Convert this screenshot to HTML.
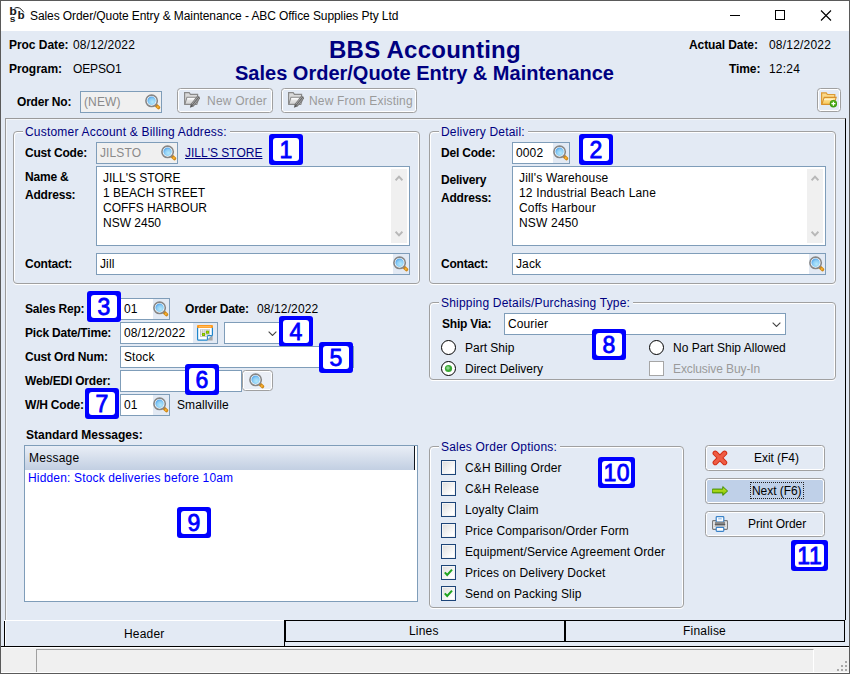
<!DOCTYPE html>
<html><head><meta charset="utf-8"><title>Sales Order/Quote Entry &amp; Maintenance</title>
<style>
*{box-sizing:border-box;margin:0;padding:0}
html,body{width:850px;height:674px;overflow:hidden;background:#fff}
body{font-family:"Liberation Sans",Arial,sans-serif;font-size:12px;color:#000;position:relative;letter-spacing:0.12px}
.a{position:absolute;white-space:nowrap;line-height:14px}
.b{font-weight:bold;letter-spacing:-0.2px}
.nv{color:#000080}
.inp{position:absolute;background:#fff;border:1px solid #7f9db9;height:22px}
.inp.dis{background:#f0f0f0;color:#8a8a8a}
.inp span{position:absolute;top:3px;left:3px;line-height:14px;white-space:nowrap}
.inp i{position:absolute;top:0;right:0;width:16px;height:20px;background:#e3eaf4}
.inp svg{position:absolute;top:2px;right:0}
.grp{position:absolute;border:1px solid #a0a0a0;border-radius:4px;box-shadow:inset 1px 1px 0 #fff,inset -1px 0 0 #fff,0 1px 0 #fff}
.gl{letter-spacing:0.2px;position:absolute;background:#e3eaf4;color:#000080;line-height:14px;white-space:nowrap;padding:0 3px 0 2px}
.btn{position:absolute;border:1px solid #a0a0a0;border-radius:3.5px;background:#e3eaf4;box-shadow:inset 0 0 0 1px #fff}
.btn span{letter-spacing:-0.05px;position:absolute;line-height:14px;white-space:nowrap}
.btn svg{position:absolute}
.badge{position:absolute;border-radius:3px;background:#0000ff;height:31px}
.badge b{position:absolute;left:4px;top:4px;right:4px;bottom:4px;background:#fff;border-radius:3px;color:#0000ff;font-weight:normal;font-style:normal;-webkit-text-stroke:0.8px #0000ff;text-align:center;font-size:23px;line-height:25px;letter-spacing:0.5px;text-indent:0.5px}
.cb{position:absolute;width:15px;height:15px;border:1px solid #1c4478;background:linear-gradient(135deg,#dcdcdc,#fff 80%);box-shadow:inset 0 0 0 1px #f4f4f4}
.cb svg{position:absolute;left:0;top:0}
.rb{position:absolute;width:15px;height:15px;border:1.15px solid #000;border-radius:50%;background:#fff}
.sb{position:absolute;right:2px;top:2px;bottom:2px;width:16px;background:#f0f0f0}
.sb svg{position:absolute}
</style></head><body>
<svg width="0" height="0" style="position:absolute">
<defs>
<radialGradient id="lens" cx="0.6" cy="0.65" r="0.7"><stop offset="0" stop-color="#b4e8fb"/><stop offset="0.6" stop-color="#8ccdf5"/><stop offset="1" stop-color="#4a9ee8"/></radialGradient>
<symbol id="mag" viewBox="0 0 16 16"><path d="M11 11.2L13.5 13.6" stroke="#cf8a1c" stroke-width="3.4" stroke-linecap="round"/><circle cx="12.9" cy="13.1" r="1" fill="#ffb52e"/><circle cx="6.6" cy="6.8" r="5.7" fill="#fff" stroke="#868686" stroke-width="1.6"/><circle cx="6.6" cy="6.8" r="4.2" fill="url(#lens)"/></symbol>
<linearGradient id="fg" x1="0" y1="0" x2="0" y2="1"><stop offset="0" stop-color="#fde9a8"/><stop offset="1" stop-color="#f7c85a"/></linearGradient>
<linearGradient id="gg" x1="0" y1="0" x2="0" y2="1"><stop offset="0" stop-color="#f4f4f4"/><stop offset="1" stop-color="#cfcfcf"/></linearGradient>
<linearGradient id="ag" x1="0" y1="0" x2="0" y2="1"><stop offset="0" stop-color="#c8ec28"/><stop offset="1" stop-color="#7fbc00"/></linearGradient>
<symbol id="fold" viewBox="0 0 16 16"><path d="M0.6 12.4V0.9h4.6l1.2 1.6h7.4v3" fill="#fad98a" stroke="#dc9a34" stroke-width="1.2"/><path d="M0.8 12.4L3.2 5.4h12L12.8 12.4z" fill="url(#fg)" stroke="#d8922e" stroke-width="1.1"/><path d="M3 7.6h9" stroke="#fff6d8" stroke-width="1" opacity="0.9"/><circle cx="12.4" cy="11.7" r="3.7" fill="#3c9c10"/><circle cx="12.4" cy="11.2" r="2.6" fill="#58b820" opacity="0.7"/><path d="M10.4 11.7h4M12.4 9.7v4" stroke="#fff" stroke-width="1.2"/></symbol>
<symbol id="foldg" viewBox="0 0 16 16"><path d="M0.6 12.4V0.7h4.6l1.2 1.6h7.2v3" fill="#d9d9d9" stroke="#8a8a8a" stroke-width="1.2"/><path d="M0.8 12.4L3 5.2h12.2L12.8 12.4z" fill="url(#gg)" stroke="#8a8a8a" stroke-width="1.1"/><path d="M3.4 6.8h6.5" stroke="#fff" stroke-width="1.1"/><path d="M15 4.8L8.2 13.2" stroke="#6a6a6a" stroke-width="3.8"/><path d="M14.2 4.3L7.5 12.6M15.6 5.4L8.9 13.7" stroke="#c2c2c2" stroke-width="0.7"/><path d="M5.9 15.8l0.9-3.9 3 2.4z" fill="#5a5a5a"/></symbol>
<symbol id="cal" viewBox="0 0 16 16"><path d="M0.6 2v12.2a1 1 0 0 0 1 1H10l5.4-5V2z" fill="#fff" stroke="#1f86cc" stroke-width="1.2"/><path d="M10 15.4l5.6-5.2v5.2z" fill="#a8a8a8"/><path d="M10.4 14.6v-3.2a0.8 0.8 0 0 1 0.8-0.8h3.6" fill="#fff" stroke="#1f86cc" stroke-width="1.1"/><rect x="0" y="0" width="16" height="3" rx="1" fill="#ff9a1c"/><path d="M2 1.8h12" stroke="#ffd08a" stroke-width="0.8"/><path d="M3.5 4.5v7M5.7 4.5v7M7.9 4.5v7M10.1 4.5v7M12.3 4.5v5M3.2 4.8h9.6M3.2 7h9.6M3.2 9.2h9.6M3.2 11.4h7" stroke="#b4b4b4" stroke-width="0.7"/><rect x="5" y="8" width="3" height="3" fill="#78b400"/><rect x="9" y="5.7" width="3" height="3" fill="#78b400"/><rect x="5.9" y="8.9" width="1.2" height="1.2" fill="#b8e000"/><rect x="9.9" y="6.6" width="1.2" height="1.2" fill="#b8e000"/></symbol>
<symbol id="xx" viewBox="0 0 16 16"><path d="M3.2 3.2L12.6 12.6M12.6 3.2L3.2 12.6" stroke="#d22c12" stroke-width="5.2" stroke-linecap="round"/><path d="M3.2 3.2L12.6 12.6M12.6 3.2L3.2 12.6" stroke="#ee5c44" stroke-width="3.4" stroke-linecap="round"/></symbol>
<symbol id="arr" viewBox="0 0 16 16"><path d="M0.8 6.1h10V3.6L15.6 8L10.8 12.4V9.9h-10a0.8 0.8 0 0 1 -0.8 -0.8v-2.2a0.8 0.8 0 0 1 0.8 -0.8z" fill="url(#ag)" stroke="#3f8a00" stroke-width="1"/></symbol>
<symbol id="prn" viewBox="0 0 16 16"><rect x="0.6" y="4.6" width="14.8" height="8.8" rx="0.8" fill="#f2f2f2" stroke="#767676" stroke-width="1.1"/><rect x="4.2" y="0.6" width="7.6" height="5.4" rx="0.8" fill="#fff" stroke="#3a82c8" stroke-width="1.2"/><path d="M6.2 2.8h3.6" stroke="#9cc4ee" stroke-width="1.3"/><rect x="2.8" y="5.8" width="10.4" height="3.6" fill="#8a8a8a"/><path d="M2.8 8.6h10.4" stroke="#5e5e5e" stroke-width="1.4"/><path d="M2.2 10.6h11.6" stroke="#c4c4c4" stroke-width="1"/><rect x="4.2" y="11.4" width="7.6" height="4" rx="0.8" fill="#fff" stroke="#3a82c8" stroke-width="1.2"/></symbol>
<symbol id="chev" viewBox="0 0 10 6"><path d="M0.7 0.7L5 5L9.3 0.7" fill="none" stroke="#444" stroke-width="1.2"/></symbol>
</defs></svg>
<!-- window frame -->
<div class="a" style="left:0;top:0;width:850px;height:674px;background:#5a5a5a"></div>
<div class="a" style="left:1px;top:1px;width:848px;height:30px;background:#fff"></div>
<div class="a" style="left:1px;top:31px;width:848px;height:616px;background:#e3eaf4"></div>
<!-- title -->
<div class="a" id="ttl" style="left:30px;top:9px;font-size:12px;letter-spacing:-0.085px">Sales Order/Quote Entry &amp; Maintenance - ABC Office Supplies Pty Ltd</div>
<svg class="a" style="left:8px;top:5px" width="18" height="18" viewBox="0 0 18 18" font-family="Liberation Mono,monospace" font-weight="bold" fill="#1a1a1a"><text transform="translate(1.3 9.6) scale(1.22 1)" font-size="10.5">b</text><text transform="translate(9.6 13.8) scale(1.15 1)" font-size="10.5">b</text><text transform="translate(1.4 16.8) scale(1.2 1)" font-size="8.5">s</text><path d="M6.5 3.2Q11.5 0.6 15.8 7.4" fill="none" stroke="#1a1a1a" stroke-width="1"/></svg>
<svg class="a" style="left:720px;top:1px" width="128" height="30" viewBox="0 0 128 30"><path d="M10 14.5h10" stroke="#000" stroke-width="1"/><rect x="55.5" y="9.5" width="9" height="9" fill="none" stroke="#000" stroke-width="1"/><path d="M101 9.5l10 10M111 9.5l-10 10" stroke="#000" stroke-width="1.1"/></svg>

<!-- header labels -->
<div class="a b" style="left:9px;top:38px;letter-spacing:-0.05px">Proc Date:</div>
<div class="a" style="left:73px;top:38px;letter-spacing:0.2px">08/12/2022</div>
<div class="a b" style="left:9px;top:62px;letter-spacing:-0.05px">Program:</div>
<div class="a" style="left:73px;top:62px;letter-spacing:-0.15px">OEPSO1</div>
<div class="a b nv" id="h1" style="left:329px;top:36px;font-size:24px;line-height:28px;letter-spacing:0.25px">BBS Accounting</div>
<div class="a b nv" id="h2" style="left:235px;top:61px;font-size:20px;line-height:24px;letter-spacing:0">Sales Order/Quote Entry &amp; Maintenance</div>
<div class="a b" style="left:689px;top:38px;letter-spacing:-0.1px">Actual Date:</div>
<div class="a" style="left:769px;top:38px;letter-spacing:0.2px">08/12/2022</div>
<div class="a b" style="left:729px;top:62px;letter-spacing:-0.1px">Time:</div>
<div class="a" style="left:769px;top:62px;letter-spacing:0.2px">12:24</div>

<div class="a b" style="left:17px;top:95px">Order No:</div>
<div class="inp dis" style="left:80px;top:91px;width:82px"><span>(NEW)</span><svg width="16" height="16"><use href="#mag"/></svg></div>
<div class="btn" style="left:177px;top:88px;width:96px;height:25px;color:#9a9a9a"><svg style="left:6px;top:3px" width="16" height="16"><use href="#foldg"/></svg><span style="left:29px;top:5px;letter-spacing:0.22px">New Order</span></div>
<div class="btn" style="left:281px;top:88px;width:136px;height:25px;color:#9a9a9a"><svg style="left:6px;top:3px" width="16" height="16"><use href="#foldg"/></svg><span style="left:27px;top:5px;letter-spacing:0.18px">New From Existing</span></div>
<div class="btn" style="left:817px;top:88px;width:24px;height:24px"><svg style="left:3px;top:3px" width="16" height="16"><use href="#fold"/></svg></div>

<!-- tab panel -->
<div class="a" style="left:5px;top:118px;width:841px;height:502px;border-top:1px solid #9a9a9a;border-left:1px solid #9a9a9a;border-right:1px solid #000;box-shadow:inset 1px 1px 0 #f3f6fa"></div>

<!-- group 1 -->
<div class="grp" style="left:13px;top:131px;width:407px;height:153px"></div>
<div class="gl" style="left:23px;top:125px">Customer Account &amp; Billing Address:</div>
<div class="a b" style="left:25px;top:146px">Cust Code:</div>
<div class="inp dis" style="left:96px;top:142px;width:82px"><span>JILSTO</span><svg width="16" height="16"><use href="#mag"/></svg></div>
<div class="a nv" style="left:185px;top:146px;text-decoration:underline;letter-spacing:0">JILL'S STORE</div>
<div class="badge" style="left:269px;top:134px;width:34px"><b>1</b></div>
<div class="a b" style="left:25px;top:168px;line-height:18px">Name &amp;<br>Address:</div>
<div class="inp" style="left:96px;top:166px;width:314px;height:80px"><span style="left:6px;top:4px;line-height:15px;white-space:pre;letter-spacing:0">JILL'S STORE
1 BEACH STREET
COFFS HARBOUR
NSW 2450</span><div class="sb"><svg style="left:4px;top:6px;right:auto" width="8" height="6" viewBox="0 0 8 6"><path d="M0.6 5.2L4 1.6L7.4 5.2" fill="none" stroke="#b8b8b8" stroke-width="2"/></svg><svg style="left:4px;bottom:6px;top:auto;right:auto" width="8" height="6" viewBox="0 0 8 6"><path d="M0.6 0.8L4 4.4L7.4 0.8" fill="none" stroke="#b8b8b8" stroke-width="2"/></svg></div></div>
<div class="a b" style="left:25px;top:257px">Contact:</div>
<div class="inp" style="left:96px;top:253px;width:314px"><span>Jill</span><i></i><svg width="16" height="16"><use href="#mag"/></svg></div>

<!-- group 2 -->
<div class="grp" style="left:429px;top:131px;width:407px;height:153px"></div>
<div class="gl" style="left:439px;top:125px">Delivery Detail:</div>
<div class="a b" style="left:441px;top:146px">Del Code:</div>
<div class="inp" style="left:512px;top:142px;width:58px"><span>0002</span><i></i><svg width="16" height="16"><use href="#mag"/></svg></div>
<div class="badge" style="left:579px;top:134px;width:34px"><b>2</b></div>
<div class="a b" style="left:441px;top:171px;line-height:18px">Delivery<br>Address:</div>
<div class="inp" style="left:512px;top:166px;width:314px;height:80px"><span style="left:6px;top:4px;line-height:15px;white-space:pre;letter-spacing:0.18px">Jill's Warehouse
12 Industrial Beach Lane
Coffs Harbour
NSW 2450</span><div class="sb"><svg style="left:4px;top:6px;right:auto" width="8" height="6" viewBox="0 0 8 6"><path d="M0.6 5.2L4 1.6L7.4 5.2" fill="none" stroke="#b8b8b8" stroke-width="2"/></svg><svg style="left:4px;bottom:6px;top:auto;right:auto" width="8" height="6" viewBox="0 0 8 6"><path d="M0.6 0.8L4 4.4L7.4 0.8" fill="none" stroke="#b8b8b8" stroke-width="2"/></svg></div></div>
<div class="a b" style="left:441px;top:257px">Contact:</div>
<div class="inp" style="left:512px;top:253px;width:314px"><span>Jack</span><i></i><svg width="16" height="16"><use href="#mag"/></svg></div>

<!-- left middle -->
<div class="a b" style="left:25px;top:302px">Sales Rep:</div>
<div class="inp" style="left:120px;top:298px;width:50px"><span>01</span><i></i><svg width="16" height="16"><use href="#mag"/></svg></div>
<div class="badge" style="left:87px;top:291px;width:34px"><b>3</b></div>
<div class="a b" style="left:185px;top:302px">Order Date:</div>
<div class="a" style="left:257px;top:302px">08/12/2022</div>
<div class="a b" style="left:25px;top:326px">Pick Date/Time:</div>
<div class="inp" style="left:120px;top:322px;width:98px"><span>08/12/2022</span><i style="width:24px"></i><svg style="right:4px;top:2px" width="16" height="16"><use href="#cal"/></svg></div>
<div class="inp" style="left:224px;top:322px;width:58px"><svg style="right:4px;top:8px" width="9" height="5.4"><use href="#chev"/></svg></div>
<div class="badge" style="left:279px;top:316px;width:34px"><b>4</b></div>
<div class="a b" style="left:25px;top:350px">Cust Ord Num:</div>
<div class="inp" style="left:120px;top:346px;width:234px"><span>Stock</span></div>
<div class="badge" style="left:319px;top:342px;width:34px"><b>5</b></div>
<div class="a b" style="left:25px;top:374px">Web/EDI Order:</div>
<div class="inp" style="left:120px;top:370px;width:122px"></div>
<div class="badge" style="left:185px;top:364px;width:34px"><b>6</b></div>
<div class="btn" style="left:242px;top:370px;width:31px;height:21px;background:#ebeff6"><svg style="left:6px;top:2px" width="16" height="16"><use href="#mag"/></svg></div>
<div class="a b" style="left:25px;top:398px">W/H Code:</div>
<div class="inp" style="left:120px;top:394px;width:50px"><span>01</span><i></i><svg width="16" height="16"><use href="#mag"/></svg></div>
<div class="badge" style="left:85px;top:388px;width:34px"><b>7</b></div>
<div class="a" style="left:177px;top:398px">Smallville</div>
<div class="a b" style="left:26px;top:428px;letter-spacing:0">Standard Messages:</div>

<!-- list -->
<div class="a" style="left:24px;top:445px;width:394px;height:157px;background:#fff;border:1px solid #7f9db9"></div>
<div class="a" style="left:25px;top:446px;width:390px;height:24px;background:linear-gradient(#e9eef6,#c2cfe2);border-right:1px solid #10161e"></div>
<div class="a" style="left:29px;top:451px;letter-spacing:0.25px">Message</div>
<div class="a" style="left:28px;top:471px;color:#0000ff;letter-spacing:0.16px">Hidden: Stock deliveries before 10am</div>
<div class="badge" style="left:177px;top:507px;width:34px"><b>9</b></div>

<!-- shipping group -->
<div class="grp" style="left:429px;top:302px;width:407px;height:78px"></div>
<div class="gl" style="left:439px;top:296px">Shipping Details/Purchasing Type:</div>
<div class="a b" style="left:442px;top:317px">Ship Via:</div>
<div class="inp" style="left:504px;top:313px;width:282px"><span>Courier</span><svg style="right:4px;top:8px" width="9" height="5.4"><use href="#chev"/></svg></div>
<div class="rb" style="left:441px;top:340px"></div><div class="a" style="left:465px;top:341px;letter-spacing:0">Part Ship</div>
<div class="rb" style="left:441px;top:361px"><svg width="13" height="13" style="position:absolute;left:0;top:0"><circle cx="6.5" cy="6.5" r="3.6" fill="#3aa935"/><circle cx="6" cy="6" r="1.8" fill="#8fd48c"/></svg></div><div class="a" style="left:465px;top:362px;letter-spacing:0">Direct Delivery</div>
<div class="rb" style="left:649px;top:340px"></div><div class="a" style="left:673px;top:341px;letter-spacing:0">No Part Ship Allowed</div>
<div class="cb" style="left:649px;top:361px;border-color:#a6a6a6;background:#fff;box-shadow:none"></div><div class="a" style="left:673px;top:362px;color:#9a9a9a;letter-spacing:-0.1px">Exclusive Buy-In</div>
<div class="badge" style="left:592px;top:329px;width:34px"><b>8</b></div>

<!-- options group -->
<div class="grp" style="left:429px;top:446px;width:255px;height:162px"></div>
<div class="gl" style="left:439px;top:440px">Sales Order Options:</div>
<div class="cb" style="left:441px;top:460px"></div><div class="a" style="left:465px;top:461px">C&amp;H Billing Order</div>
<div class="cb" style="left:441px;top:481px"></div><div class="a" style="left:465px;top:482px">C&amp;H Release</div>
<div class="cb" style="left:441px;top:502px"></div><div class="a" style="left:465px;top:503px">Loyalty Claim</div>
<div class="cb" style="left:441px;top:523px"></div><div class="a" style="left:465px;top:524px">Price Comparison/Order Form</div>
<div class="cb" style="left:441px;top:544px"></div><div class="a" style="left:465px;top:545px">Equipment/Service Agreement Order</div>
<div class="cb" style="left:441px;top:565px"><svg width="13" height="13"><path d="M2.8 6.3L5.2 9L10 3.6" fill="none" stroke="#1fa31f" stroke-width="2"/></svg></div><div class="a" style="left:465px;top:566px">Prices on Delivery Docket</div>
<div class="cb" style="left:441px;top:586px"><svg width="13" height="13"><path d="M2.8 6.3L5.2 9L10 3.6" fill="none" stroke="#1fa31f" stroke-width="2"/></svg></div><div class="a" style="left:465px;top:587px">Send on Packing Slip</div>
<div class="badge" style="left:598px;top:457px;width:37px"><b>10</b></div>

<!-- buttons -->
<div class="btn" style="left:705px;top:445px;width:120px;height:26px"><svg style="left:6px;top:4px" width="16" height="16"><use href="#xx"/></svg><span style="left:48px;top:5px">Exit (F4)</span></div>
<div class="btn" style="left:705px;top:478px;width:120px;height:26px;background:#bfd0e8"><svg style="left:6px;top:4px" width="16" height="16"><use href="#arr"/></svg><span style="left:46px;top:5px">Next (F6)</span><div style="position:absolute;left:44px;top:3px;width:54px;height:17px;border:1px dotted #222"></div></div>
<div class="btn" style="left:705px;top:511px;width:120px;height:26px"><svg style="left:6px;top:4px" width="16" height="16"><use href="#prn"/></svg><span style="left:42px;top:5px">Print Order</span></div>
<div class="badge" style="left:791px;top:540px;width:37px"><b>11</b></div>

<!-- tabs -->
<div class="a" style="left:4px;top:620px;width:280px;height:1px;background:#fff"></div>
<div class="a" style="left:4px;top:621px;width:1px;height:26px;background:#000"></div>
<div class="a" style="left:5px;top:621px;width:1px;height:25px;background:#fff"></div>
<div class="a" style="left:284px;top:620px;width:1px;height:27px;background:#000"></div>
<div class="a" style="left:124px;top:627px;letter-spacing:0.2px">Header</div>
<div class="a" style="left:285px;top:620px;width:280px;height:22px;border:1px solid #000"></div>
<div class="a" style="left:409px;top:624px;letter-spacing:0.2px">Lines</div>
<div class="a" style="left:564px;top:620px;width:281px;height:22px;border:1px solid #000;border-left-width:2px"></div>
<div class="a" style="left:683px;top:624px;letter-spacing:0.2px">Finalise</div>

<!-- status bar -->
<div class="a" style="left:1px;top:646px;width:848px;height:1px;background:#000"></div>
<div class="a" style="left:1px;top:647px;width:848px;height:26px;background:#f0f0f0;border-top:1px solid #fff;border-bottom:1px solid #fff"></div>
<div class="a" style="left:36px;top:649px;width:778px;height:23px;border-top:1px solid #a0a0a0;border-left:1px solid #a0a0a0;border-right:1px solid #fff"></div>
<svg class="a" style="left:836px;top:660px" width="14" height="14"><rect x="9" y="1" width="2" height="2" fill="#a8a8a8"/><rect x="5" y="5" width="2" height="2" fill="#a8a8a8"/><rect x="9" y="5" width="2" height="2" fill="#a8a8a8"/><rect x="1" y="9" width="2" height="2" fill="#a8a8a8"/><rect x="5" y="9" width="2" height="2" fill="#a8a8a8"/><rect x="9" y="9" width="2" height="2" fill="#a8a8a8"/></svg>
</body></html>
